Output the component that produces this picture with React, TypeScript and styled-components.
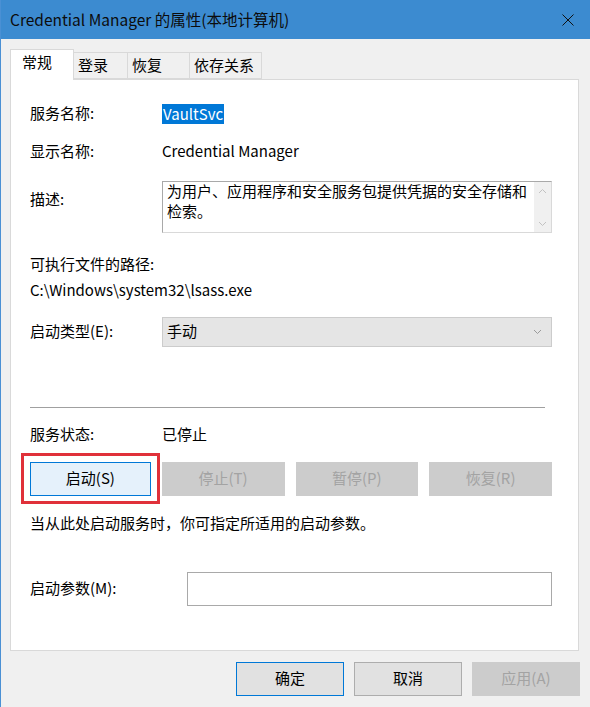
import { createGlobalStyle } from "styled-components";
import styled from "styled-components";

const GlobalStyle = createGlobalStyle`
  html, body {
    margin: 0;
    padding: 0;
    background: #f0f0f0;
  }
  body {
    font-family: "Noto Sans CJK SC", "Noto Sans", sans-serif;
    font-size: 15px;
    color: #000;
  }
`;

const Window = styled.div`
  width: 589px;
  height: 707px;
  border-left: 1px solid #4a90d4;
  display: flex;
  flex-direction: column;
  background: #f0f0f0;
  overflow: hidden;
`;

const TitleBar = styled.div`
  height: 39px;
  flex-shrink: 0;
  background: #3c8bd0;
  display: flex;
  align-items: center;
  justify-content: space-between;
  padding: 0 16px 0 9px;
  .title {
    font-size: 15.5px;
    color: #0c0c0c;
    white-space: nowrap;
    margin-top: -2px;
  }
`;

const Body = styled.div`
  flex: 1;
  padding: 10px 0 0 9px;
  display: flex;
  flex-direction: column;
`;

const TabStrip = styled.div`
  display: flex;
  align-items: flex-end;
  height: 30px;
  position: relative;
  z-index: 1;
`;

const Tab = styled.div<{ $active?: boolean; $w: number }>`
  box-sizing: border-box;
  width: ${(p) => p.$w}px;
  height: ${(p) => (p.$active ? 31 : 27)}px;
  margin-bottom: ${(p) => (p.$active ? -1 : 0)}px;
  padding: ${(p) => (p.$active ? "1px 0 0 11px" : "1px 0 0 4px")};
  background: ${(p) => (p.$active ? "#ffffff" : "#f0f0f0")};
  border: 1px solid #d9d9d9;
  border-bottom: ${(p) => (p.$active ? "none" : "1px solid #d9d9d9")};
  border-left: ${(p) => (p.$active ? "1px solid #d9d9d9" : "none")};
  line-height: 22px;
  white-space: nowrap;
`;

const Panel = styled.div`
  box-sizing: border-box;
  width: 569px;
  height: 572px;
  background: #fff;
  border: 1px solid #d9d9d9;
  padding: 0 26px 0 19px;
  display: flex;
  flex-direction: column;
`;

const Row = styled.div<{ $mt: number; $h: number }>`
  display: flex;
  align-items: center;
  margin-top: ${(p) => p.$mt}px;
  height: ${(p) => p.$h}px;
  line-height: 22px;
  white-space: nowrap;
`;

const Label = styled.div<{ $w?: number; $top?: boolean }>`
  width: ${(p) => p.$w ?? 132}px;
  flex-shrink: 0;
  align-self: ${(p) => (p.$top ? "flex-start" : "center")};
  padding-top: ${(p) => (p.$top ? 7 : 0)}px;
  margin-top: ${(p) => (p.$top ? 0 : -2)}px;
`;

const Value = styled.span`
  margin-top: -2px;
`;

const Selected = styled.span`
  background: #0078d7;
  color: #fff;
  padding: 0 1px;
  line-height: 20px;
  margin-top: -1px;
`;

const DescBox = styled.div`
  box-sizing: border-box;
  flex: 1;
  height: 52px;
  border: 1px solid #d9d9d9;
  border-top-color: #a9a9a9;
  border-left-color: #a9a9a9;
  display: flex;
  .text {
    flex: 1;
    padding: 0 0 0 4px;
    line-height: 20px;
    white-space: normal;
    margin-top: -1px;
  }
  .scroll {
    width: 17px;
    background: #f0f0f0;
    display: flex;
    flex-direction: column;
    justify-content: space-between;
    align-items: center;
    padding: 6px 0 5px;
  }
`;

const Select = styled.div`
  box-sizing: border-box;
  flex: 1;
  height: 30px;
  background: #e5e5e5;
  border: 1px solid #cccccc;
  display: flex;
  align-items: center;
  justify-content: space-between;
  padding: 0 9px 0 4px;
  span {
    margin-top: -2px;
  }
`;

const Separator = styled.div`
  margin-top: 60px;
  height: 1px;
  width: 515px;
  background: #a0a0a0;
`;

const ButtonRow = styled.div`
  display: flex;
  gap: 11px;
  margin-top: 16px;
  height: 34px;
`;

const Highlight = styled.div`
  flex: 1;
  display: flex;
  position: relative;
  &::after {
    content: "";
    position: absolute;
    left: -9px;
    top: -9px;
    right: -9px;
    bottom: -8px;
    border: 3px solid #e0313a;
    pointer-events: none;
  }
`;

const Button = styled.div<{ $variant?: "focus" | "default" | "disabled" | "normal" }>`
  box-sizing: border-box;
  flex: 1;
  height: 34px;
  display: flex;
  align-items: center;
  justify-content: center;
  font-size: 15px;
  padding-bottom: 3px;
  background: ${(p) =>
    p.$variant === "focus"
      ? "#e5f1fb"
      : p.$variant === "disabled"
      ? "#cccccc"
      : "#e1e1e1"};
  color: ${(p) => (p.$variant === "disabled" ? "#a3a3a3" : "#000")};
  border: 1px solid
    ${(p) =>
      p.$variant === "focus" || p.$variant === "default"
        ? "#0078d7"
        : p.$variant === "disabled"
        ? "#cccccc"
        : "#adadad"};
`;

const ParamInput = styled.div`
  box-sizing: border-box;
  flex: 1;
  height: 34px;
  border: 1px solid #a9a9a9;
  background: #fff;
`;

const Footer = styled.div`
  display: flex;
  gap: 10px;
  margin: 11px 0 0 226px;
  width: 345px;
  & > div {
    flex: none;
    width: 108px;
    height: 34px;
  }
`;

const Chevron = ({ up, color = "#a6a6a6" }: { up?: boolean; color?: string }) => (
  <svg width="9" height="6" viewBox="0 0 9 6">
    <path
      d={up ? "M1 5 L4.5 1.5 L8 5" : "M1 1 L4.5 4.5 L8 1"}
      fill="none"
      stroke={color}
      strokeWidth="1"
    />
  </svg>
);

export default function App() {
  return (
    <>
      <GlobalStyle />
      <Window>
        <TitleBar>
          <span className="title">Credential Manager 的属性(本地计算机)</span>
          <svg width="12" height="12" viewBox="0 0 12 12">
            <path d="M0.5 0.5 L11.5 11.5 M11.5 0.5 L0.5 11.5" stroke="#111" strokeWidth="1" />
          </svg>
        </TitleBar>
        <Body>
          <TabStrip>
            <Tab $active $w={64}>常规</Tab>
            <Tab $w={54}>登录</Tab>
            <Tab $w={62}>恢复</Tab>
            <Tab $w={72}>依存关系</Tab>
          </TabStrip>
          <Panel>
            <Row $mt={23} $h={22}>
              <Label>服务名称:</Label>
              <Selected>VaultSvc</Selected>
            </Row>
            <Row $mt={16} $h={22}>
              <Label>显示名称:</Label>
              <Value>Credential Manager</Value>
            </Row>
            <Row $mt={18} $h={52}>
              <Label $top>描述:</Label>
              <DescBox>
                <div className="text">
                  为用户、应用程序和安全服务包提供凭据的安全存储和检索。
                </div>
                <div className="scroll">
                  <Chevron up color="#c2c2c2" />
                  <Chevron color="#c2c2c2" />
                </div>
              </DescBox>
            </Row>
            <Row $mt={21} $h={22}>
              <Value>可执行文件的路径:</Value>
            </Row>
            <Row $mt={4} $h={22}>
              <Value>C:\Windows\system32\lsass.exe</Value>
            </Row>
            <Row $mt={15} $h={30}>
              <Label>启动类型(E):</Label>
              <Select>
                <span>手动</span>
                <Chevron color="#9a9a9a" />
              </Select>
            </Row>
            <Separator />
            <Row $mt={16} $h={22}>
              <Label>服务状态:</Label>
              <Value>已停止</Value>
            </Row>
            <ButtonRow>
              <Highlight>
                <Button $variant="focus">启动(S)</Button>
              </Highlight>
              <Button $variant="disabled">停止(T)</Button>
              <Button $variant="disabled">暂停(P)</Button>
              <Button $variant="disabled">恢复(R)</Button>
            </ButtonRow>
            <Row $mt={17} $h={22}>
              <Value>当从此处启动服务时，你可指定所适用的启动参数。</Value>
            </Row>
            <Row $mt={37} $h={34}>
              <Label $w={157}>启动参数(M):</Label>
              <ParamInput />
            </Row>
          </Panel>
          <Footer>
            <Button $variant="default">确定</Button>
            <Button $variant="normal">取消</Button>
            <Button $variant="disabled">应用(A)</Button>
          </Footer>
        </Body>
      </Window>
    </>
  );
}
